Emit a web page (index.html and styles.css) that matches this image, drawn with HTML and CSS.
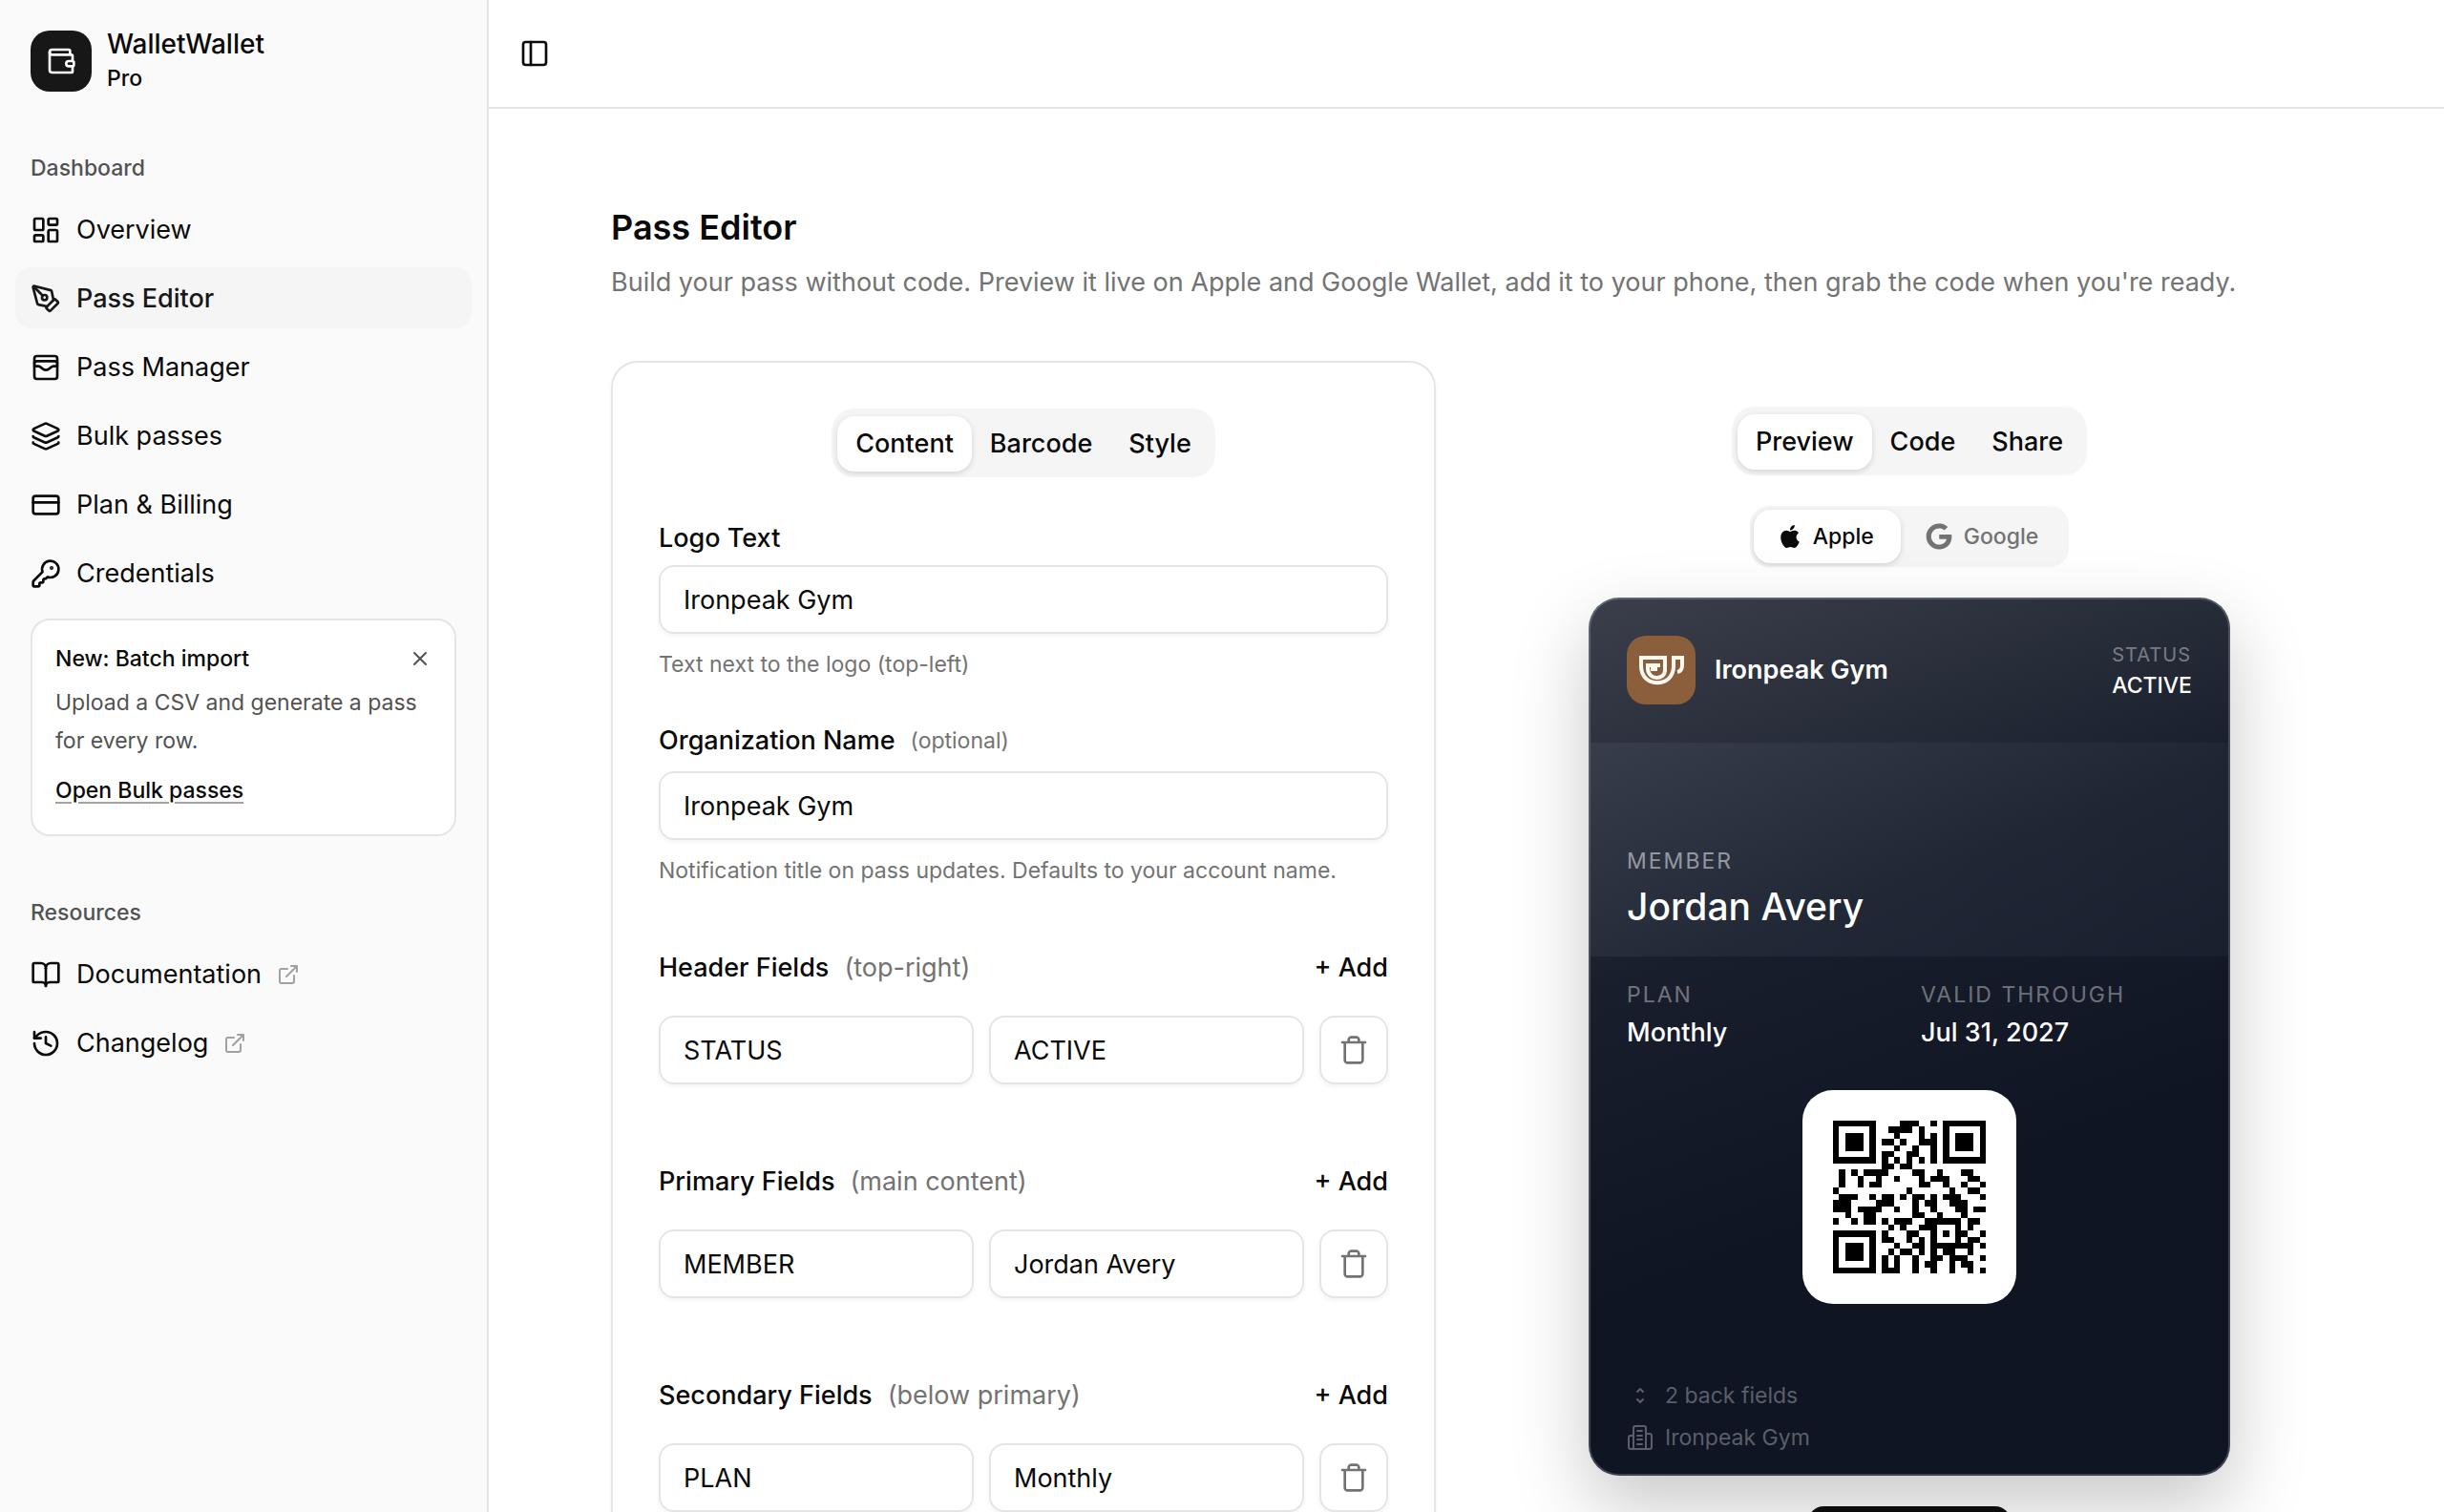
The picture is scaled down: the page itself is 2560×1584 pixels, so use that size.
FILE: index.html
```html
<!DOCTYPE html>
<html lang="en">
<head>
<meta charset="utf-8">
<meta name="viewport" content="width=device-width, initial-scale=1">
<title>Pass Editor – WalletWallet</title>
<link rel="stylesheet" href="styles.css">
</head>
<body>
<svg class="sprite" aria-hidden="true">
  <symbol id="trash" viewBox="0 0 24 24"><path d="M3 6h18M19 6v14c0 1-1 2-2 2H7c-1 0-2-1-2-2V6M8 6V4c0-1 1-2 2-2h4c1 0 2 1 2 2v2"/></symbol>
  <symbol id="external" viewBox="0 0 24 24"><path d="M15 3h6v6M10 14 21 3M18 13v6a2 2 0 0 1-2 2H5a2 2 0 0 1-2-2V8a2 2 0 0 1 2-2h6"/></symbol>
</svg>
<div class="app">
  <aside class="sidebar">
    <div class="brand">
      <span class="brand-mark"><svg class="icon" viewBox="0 0 24 24"><path d="M19 7V4a1 1 0 0 0-1-1H5a2 2 0 0 0 0 4h15a1 1 0 0 1 1 1v4h-3a2 2 0 0 0 0 4h3a1 1 0 0 0 1-1v-2a1 1 0 0 0-1-1"/><path d="M3 5v14a2 2 0 0 0 2 2h15a1 1 0 0 0 1-1v-4"/></svg></span>
      <div class="brand-text"><span class="brand-name">WalletWallet</span><span class="brand-plan">Pro</span></div>
    </div>
    <nav class="group" aria-label="Dashboard">
      <h2 class="group-title">Dashboard</h2>
      <ul class="nav">
        <li><a class="nav-item" href="#overview"><svg class="icon" viewBox="0 0 24 24"><rect x="3" y="3" width="7" height="9" rx="1"/><rect x="14" y="3" width="7" height="5" rx="1"/><rect x="14" y="12" width="7" height="9" rx="1"/><rect x="3" y="16" width="7" height="5" rx="1"/></svg>Overview</a></li>
        <li><a class="nav-item active" href="#editor" aria-current="page"><svg class="icon" viewBox="0 0 24 24"><path d="M15.707 21.293a1 1 0 0 1-1.414 0l-1.586-1.586a1 1 0 0 1 0-1.414l5.586-5.586a1 1 0 0 1 1.414 0l1.586 1.586a1 1 0 0 1 0 1.414z"/><path d="m18 13-1.375-6.874a1 1 0 0 0-.746-.776L3.235 2.028a1 1 0 0 0-1.207 1.207L5.35 15.879a1 1 0 0 0 .776.746L13 18"/><path d="m2.3 2.3 7.286 7.286"/><circle cx="11" cy="11" r="2"/></svg>Pass Editor</a></li>
        <li><a class="nav-item" href="#manager"><svg class="icon" viewBox="0 0 24 24"><rect x="3" y="3" width="18" height="18" rx="2"/><path d="M3 9a2 2 0 0 1 2-2h14a2 2 0 0 1 2 2"/><path d="M3 11h3c.8 0 1.6.3 2.1.9l1.1.9c1.6 1.6 4.1 1.6 5.7 0l1.1-.9c.5-.5 1.3-.9 2.1-.9H21"/></svg>Pass Manager</a></li>
        <li><a class="nav-item" href="#bulk"><svg class="icon" viewBox="0 0 24 24"><path d="M12.83 2.18a2 2 0 0 0-1.66 0L2.6 6.08a1 1 0 0 0 0 1.83l8.58 3.91a2 2 0 0 0 1.66 0l8.58-3.9a1 1 0 0 0 0-1.83z"/><path d="M2 12a1 1 0 0 0 .58.91l8.6 3.91a2 2 0 0 0 1.65 0l8.58-3.9A1 1 0 0 0 22 12"/><path d="M2 17a1 1 0 0 0 .58.91l8.6 3.91a2 2 0 0 0 1.65 0l8.58-3.9A1 1 0 0 0 22 17"/></svg>Bulk passes</a></li>
        <li><a class="nav-item" href="#billing"><svg class="icon" viewBox="0 0 24 24"><rect x="2" y="5" width="20" height="14" rx="2"/><path d="M2 10h20"/></svg>Plan &amp; Billing</a></li>
        <li><a class="nav-item" href="#credentials"><svg class="icon" viewBox="0 0 24 24"><path d="M2.586 17.414A2 2 0 0 0 2 18.828V21a1 1 0 0 0 1 1h3a1 1 0 0 0 1-1v-1a1 1 0 0 1 1-1h1a1 1 0 0 0 1-1v-1a1 1 0 0 1 1-1h.172a2 2 0 0 0 1.414-.586l.814-.814a6.5 6.5 0 1 0-4-4z"/><circle cx="16.5" cy="7.5" r=".5" fill="currentColor"/></svg>Credentials</a></li>
      </ul>
      <section class="promo">
        <div class="promo-head">
          <h3 class="promo-title">New: Batch import</h3>
          <button class="promo-close" type="button" aria-label="Dismiss"><svg class="icon icon-sm" viewBox="0 0 24 24"><path d="M18 6 6 18M6 6l12 12"/></svg></button>
        </div>
        <p class="promo-text">Upload a CSV and generate a pass for every row.</p>
        <a class="promo-link" href="#bulk">Open Bulk passes</a>
      </section>
    </nav>
    <nav class="group" aria-label="Resources">
      <h2 class="group-title">Resources</h2>
      <ul class="nav">
        <li><a class="nav-item" href="#docs"><svg class="icon" viewBox="0 0 24 24"><path d="M12 7v14"/><path d="M3 18a1 1 0 0 1-1-1V4a1 1 0 0 1 1-1h5a4 4 0 0 1 4 4 4 4 0 0 1 4-4h5a1 1 0 0 1 1 1v13a1 1 0 0 1-1 1h-6a3 3 0 0 0-3 3 3 3 0 0 0-3-3z"/></svg>Documentation<svg class="icon icon-sm muted"><use href="#external"/></svg></a></li>
        <li><a class="nav-item" href="#changelog"><svg class="icon" viewBox="0 0 24 24"><path d="M3 12a9 9 0 1 0 9-9 9.75 9.75 0 0 0-6.74 2.74L3 8"/><path d="M3 3v5h5"/><path d="M12 7v5l4 2"/></svg>Changelog<svg class="icon icon-sm muted"><use href="#external"/></svg></a></li>
      </ul>
    </nav>
  </aside>

  <div class="main">
    <header class="topbar">
      <button class="topbar-toggle" type="button" aria-label="Toggle sidebar"><svg class="icon" viewBox="0 0 24 24"><rect x="3" y="3" width="18" height="18" rx="2"/><path d="M9 3v18"/></svg></button>
    </header>
    <main class="content">
      <h1 class="page-title">Pass Editor</h1>
      <p class="page-desc">Build your pass without code. Preview it live on Apple and Google Wallet, add it to your phone, then grab the code when you're ready.</p>
      <div class="columns">
        <form class="panel">
          <div class="tabs" role="tablist">
            <button class="tab selected" type="button" role="tab" aria-selected="true">Content</button>
            <button class="tab" type="button" role="tab" aria-selected="false">Barcode</button>
            <button class="tab" type="button" role="tab" aria-selected="false">Style</button>
          </div>
          <div class="fields">
            <div class="field">
              <label class="label" for="logo-text">Logo Text</label>
              <input class="input" id="logo-text" type="text" value="Ironpeak Gym">
              <p class="hint">Text next to the logo (top-left)</p>
            </div>
            <div class="field">
              <label class="label" for="org-name">Organization Name <span class="optional">(optional)</span></label>
              <input class="input" id="org-name" type="text" value="Ironpeak Gym">
              <p class="hint">Notification title on pass updates. Defaults to your account name.</p>
            </div>
          </div>
          <div class="groups">
            <section class="pairs">
              <div class="pairs-head"><h2 class="pairs-title">Header Fields <span class="pairs-note">(top-right)</span></h2><button class="add" type="button">+ Add</button></div>
              <div class="pair">
                <input class="input" type="text" aria-label="Header label" value="STATUS">
                <input class="input" type="text" aria-label="Header value" value="ACTIVE">
                <button class="remove" type="button" aria-label="Remove field"><svg class="icon"><use href="#trash"/></svg></button>
              </div>
            </section>
            <section class="pairs">
              <div class="pairs-head"><h2 class="pairs-title">Primary Fields <span class="pairs-note">(main content)</span></h2><button class="add" type="button">+ Add</button></div>
              <div class="pair">
                <input class="input" type="text" aria-label="Primary label" value="MEMBER">
                <input class="input" type="text" aria-label="Primary value" value="Jordan Avery">
                <button class="remove" type="button" aria-label="Remove field"><svg class="icon"><use href="#trash"/></svg></button>
              </div>
            </section>
            <section class="pairs">
              <div class="pairs-head"><h2 class="pairs-title">Secondary Fields <span class="pairs-note">(below primary)</span></h2><button class="add" type="button">+ Add</button></div>
              <div class="pair">
                <input class="input" type="text" aria-label="Secondary label" value="PLAN">
                <input class="input" type="text" aria-label="Secondary value" value="Monthly">
                <button class="remove" type="button" aria-label="Remove field"><svg class="icon"><use href="#trash"/></svg></button>
              </div>
            </section>
          </div>
        </form>

        <section class="preview" aria-label="Preview">
          <div class="tabs" role="tablist">
            <button class="tab selected" type="button" role="tab" aria-selected="true">Preview</button>
            <button class="tab" type="button" role="tab" aria-selected="false">Code</button>
            <button class="tab" type="button" role="tab" aria-selected="false">Share</button>
          </div>
          <div class="switch">
            <button class="switch-item selected" type="button" aria-pressed="true"><svg class="logo-apple" viewBox="0 0 24 24"><path d="M12.152 6.896c-.948 0-2.415-1.078-3.96-1.04-2.04.027-3.91 1.183-4.961 3.014-2.117 3.675-.546 9.103 1.519 12.09 1.013 1.454 2.208 3.09 3.792 3.039 1.52-.065 2.09-.987 3.935-.987 1.831 0 2.35.987 3.96.948 1.637-.026 2.676-1.48 3.676-2.948 1.156-1.688 1.636-3.325 1.662-3.415-.039-.013-3.182-1.221-3.22-4.857-.026-3.04 2.48-4.494 2.597-4.559-1.429-2.09-3.623-2.324-4.39-2.376-2-.156-3.675 1.09-4.61 1.09zM15.53 3.83c.843-1.012 1.4-2.427 1.245-3.83-1.207.052-2.662.805-3.532 1.818-.78.896-1.454 2.338-1.273 3.714 1.338.104 2.715-.688 3.559-1.701"/></svg>Apple</button>
            <button class="switch-item" type="button" aria-pressed="false"><svg class="logo-google" viewBox="0 0 488 512"><path d="M488 261.8C488 403.3 391.1 504 248 504 110.8 504 0 393.2 0 256S110.8 8 248 8c66.8 0 123 24.5 166.3 64.9l-67.5 64.9C258.5 52.6 94.3 116.6 94.3 256c0 86.5 69.1 156.6 153.7 156.6 98.2 0 135-70.4 140.8-106.9H248v-85.3h236.1c2.3 12.7 3.9 24.9 3.9 41.4z"/></svg>Google</button>
          </div>

          <article class="pass">
            <header class="pass-head">
              <span class="pass-logo"><svg viewBox="0 0 72 72"><path d="M35 31H22v3c0 13 18 13 18 2V23H15v9c0 23 34 23 34 0v-9h9v8q0 6-5 7"/><path d="M30 31v4h-5"/></svg></span>
              <h2 class="pass-name">Ironpeak Gym</h2>
              <dl class="pass-status"><dt>STATUS</dt><dd>ACTIVE</dd></dl>
            </header>
            <dl class="pass-strip"><dt>MEMBER</dt><dd>Jordan Avery</dd></dl>
            <div class="pass-row">
              <dl><dt>PLAN</dt><dd>Monthly</dd></dl>
              <dl><dt>VALID THROUGH</dt><dd>Jul 31, 2027</dd></dl>
            </div>
            <div class="pass-code">
              <svg class="qr" viewBox="0 0 25 25" role="img" aria-label="QR code" shape-rendering="crispEdges">
                <path class="qr-solid" fill-rule="evenodd" d="M0 0h7v7h-7zM1 1v5h5v-5zM2 2h3v3h-3zM18 0h7v7h-7zM19 1v5h5v-5zM20 2h3v3h-3zM0 18h7v7h-7zM1 19v5h5v-5zM2 20h3v3h-3zM16 16h5v5h-5zM17 17v3h3v-3zM18 18h1v1h-1z"/>
                <path class="qr-bits" d="M11 .5h3M16 .5h1M9 1.5h4M14 1.5h1M10 2.5h1M14 2.5h1M16 2.5h1M8 3.5h2M11 3.5h1M14 3.5h3M10 4.5h1M13 4.5h1M16 4.5h1M8 5.5h2M12 5.5h2M16 5.5h1M8 6.5h1M10 6.5h1M12 6.5h1M14 6.5h1M16 6.5h1M8 7.5h2M11 7.5h2M1 8.5h1M3 8.5h1M5 8.5h4M13 8.5h2M17 8.5h1M21 8.5h2M1 9.5h1M4 9.5h1M7 9.5h1M10 9.5h1M14 9.5h1M16 9.5h3M22 9.5h2M1 10.5h1M4 10.5h1M6 10.5h2M14 10.5h2M18 10.5h1M21 10.5h1M24 10.5h1M0 11.5h1M12 11.5h1M19 11.5h1M22 11.5h2M1 12.5h3M6 12.5h1M8 12.5h2M11 12.5h1M13 12.5h2M16 12.5h1M18 12.5h3M24 12.5h1M0 13.5h3M7 13.5h3M13 13.5h1M15 13.5h2M19 13.5h3M0 14.5h3M4 14.5h4M10 14.5h1M13 14.5h1M16 14.5h1M20 14.5h2M23 14.5h2M2 15.5h1M5 15.5h2M13 15.5h2M17 15.5h1M21 15.5h1M0 16.5h1M3 16.5h1M5 16.5h2M8 16.5h1M10 16.5h3M15 16.5h1M22 16.5h2M9 17.5h1M11 17.5h1M14 17.5h2M22 17.5h1M8 18.5h1M12 18.5h2M21 18.5h1M24 18.5h1M8 19.5h2M12 19.5h1M14 19.5h1M22 19.5h2M10 20.5h1M13 20.5h2M21 20.5h2M24 20.5h1M9 21.5h1M11 21.5h2M14 21.5h1M16 21.5h1M18 21.5h2M22 21.5h1M8 22.5h1M10 22.5h1M13 22.5h1M16 22.5h2M19 22.5h3M24 22.5h1M8 23.5h1M10 23.5h1M13 23.5h1M15 23.5h2M19 23.5h1M21 23.5h2M8 24.5h3M13 24.5h1M16 24.5h1M19 24.5h1M22 24.5h1M24 24.5h1"/>
              </svg>
            </div>
            <ul class="pass-foot">
              <li><svg class="icon icon-md" viewBox="0 0 28 28"><path d="M11 10l3-3 3 3M11 18l3 3 3-3"/></svg>2 back fields</li>
              <li><svg class="icon icon-md" viewBox="0 0 28 28"><path d="M7 26V4a2 2 0 0 1 2-2h9a2 2 0 0 1 2 2v22M7 12H4a2 2 0 0 0-2 2v10a2 2 0 0 0 2 2h20a2 2 0 0 0 2-2V12a2 2 0 0 0-2-2h-4M11 7h5M11 12h5M11 16h5M11 21h5"/></svg>Ironpeak Gym</li>
            </ul>
          </article>
          <button class="badge" type="button" aria-label="Add to wallet"></button>
        </section>
      </div>
    </main>
  </div>
</div>
</body>
</html>
```
FILE: styles.css
```css
:root {
  --text: #0a0a0a;
  --muted: #737373;
  --border: #e5e5e5;
  --soft: #f5f5f5;
  --body-size: 27px;
  --small-size: 23px;
}

*, *::before, *::after { box-sizing: border-box; }

body, h1, h2, h3, p, ul, dl, dd { margin: 0; padding: 0; }

ul { list-style: none; }

body {
  background: #fff;
  color: var(--text);
  font-family: Inter, "Liberation Sans", sans-serif;
  font-size: var(--body-size);
  line-height: 40px;
}

h1, h2, h3 { font-size: inherit; font-weight: 500; }

button, input {
  font: inherit;
  color: inherit;
  border: 0;
  margin: 0;
  padding: 0;
  background: none;
}

button { cursor: pointer; }

a { color: inherit; text-decoration: none; }

.sprite { position: absolute; width: 0; height: 0; }

.icon {
  flex: none;
  display: block;
  width: 32px;
  height: 32px;
  fill: none;
  stroke: currentColor;
  stroke-width: 2;
  stroke-linecap: round;
  stroke-linejoin: round;
}

.icon-md { width: 28px; height: 28px; }
.icon-sm { width: 24px; height: 24px; }

.app {
  display: flex;
  height: 100vh;
  overflow: hidden;
}

/* Sidebar */

.sidebar {
  flex: none;
  width: 512px;
  background: #fafafa;
  border-right: 2px solid var(--border);
}

.brand {
  display: flex;
  align-items: center;
  gap: 16px;
  padding: 28px 32px;
}

.brand-mark {
  display: grid;
  place-items: center;
  width: 64px;
  height: 64px;
  border-radius: 20px;
  background: #171717;
  color: #fff;
}

.brand-text {
  display: flex;
  flex-direction: column;
  line-height: 36px;
  font-weight: 500;
}

.brand-name { font-size: 28px; }

.brand-plan { font-size: var(--small-size); }

.group { padding: 16px; }

.group-title {
  padding: 0 16px;
  font-size: var(--small-size);
  line-height: 64px;
  color: #525252;
}

.nav {
  display: flex;
  flex-direction: column;
  gap: 8px;
}

.nav-item {
  display: flex;
  align-items: center;
  gap: 16px;
  height: 64px;
  padding: 2px 16px 0;
  border-radius: 16px;
}

.nav-item.active {
  background: var(--soft);
  color: #171717;
  font-weight: 500;
}

.muted { color: #a1a1a1; }

.promo {
  margin: 16px;
  padding: 24px 24px 26px;
  border: 2px solid var(--border);
  border-radius: 20px;
  background: #fff;
  font-size: var(--small-size);
}

.promo-head {
  display: flex;
  align-items: center;
  justify-content: space-between;
  line-height: 32px;
}

.promo-close { color: #525252; }

.promo-text {
  margin-top: 10px;
  color: #525252;
}

.promo-link {
  display: inline-block;
  margin-top: 12px;
  font-weight: 500;
  text-decoration: underline;
  text-decoration-color: #a3a3a3;
  text-decoration-thickness: 2px;
  text-underline-offset: 4px;
}

/* Main area */

.main {
  flex: 1;
  min-width: 0;
  overflow-y: auto;
  scrollbar-width: none;
}

.topbar {
  display: flex;
  align-items: center;
  height: 114px;
  padding: 0 32px;
  border-bottom: 2px solid var(--border);
}

.content { padding: 100px 128px 0; }

.page-title {
  font-size: 36px;
  font-weight: 600;
  line-height: 48px;
}

.page-desc {
  margin-top: 14px;
  color: var(--muted);
}

.columns {
  display: grid;
  grid-template-columns: minmax(0, 1fr) minmax(0, 1fr);
  gap: 64px;
  margin-top: 62px;
}

.panel {
  padding: 48px;
  border: 2px solid var(--border);
  border-radius: 28px;
  box-shadow: 0 2px 4px rgba(0, 0, 0, 0.06);
}

.tabs {
  display: flex;
  width: fit-content;
  height: 72px;
  margin: 0 auto;
  padding: 8px 6px 6px;
  border-radius: 24px;
  background: var(--soft);
}

.tab {
  padding: 0 19px;
  border-radius: 18px;
  font-weight: 500;
}

.selected {
  background: #fff;
  color: var(--text);
  box-shadow: 0 2px 6px rgba(0, 0, 0, 0.14);
}

.fields {
  display: grid;
  gap: 46px;
  margin-top: 46px;
}

.label {
  display: flex;
  align-items: center;
  gap: 16px;
  margin-bottom: 12px;
  line-height: 36px;
  font-weight: 500;
}

.field:first-child .label { margin-bottom: 10px; }

.optional {
  font-size: var(--small-size);
  font-weight: 400;
  color: var(--muted);
}

.input {
  display: block;
  width: 100%;
  min-width: 0;
  height: 72px;
  padding: 0 24px;
  border: 2px solid var(--border);
  border-radius: 16px;
  background: #fff;
  box-shadow: 0 2px 4px rgba(0, 0, 0, 0.05);
}

.hint {
  margin-top: 16px;
  font-size: var(--small-size);
  line-height: 32px;
  color: var(--muted);
}

.field:last-child .label { margin-bottom: 14px; }

.groups {
  display: grid;
  gap: 82px;
  margin-top: 66px;
}

.pairs-head {
  display: flex;
  justify-content: space-between;
  margin-bottom: 30px;
}

.pairs-title { display: flex; gap: 16px; }

.pairs-note { font-weight: 400; color: var(--muted); }

.add { font-weight: 500; }

.pair {
  display: grid;
  grid-template-columns: 1fr 1fr 72px;
  gap: 16px;
}

.remove {
  display: grid;
  place-items: center;
  border: 2px solid var(--border);
  border-radius: 16px;
  color: var(--muted);
  box-shadow: 0 2px 4px rgba(0, 0, 0, 0.05);
}

/* Preview column */

.preview {
  display: flex;
  flex-direction: column;
  align-items: center;
  gap: 32px;
  padding-top: 48px;
}

.preview .tabs { margin: 0; }

.switch {
  display: flex;
  height: 64px;
  padding: 4px;
  border-radius: 20px;
  background: var(--soft);
  font-size: var(--small-size);
  font-weight: 500;
  color: var(--muted);
}

.switch-item {
  display: flex;
  align-items: center;
  gap: 12px;
  padding: 0 28px 0 26px;
  border-radius: 18px;
}

.logo-apple { width: 24px; height: 24px; fill: currentColor; }
.logo-google { width: 28px; height: 28px; fill: currentColor; }

.pass {
  display: flex;
  flex-direction: column;
  width: 100%;
  max-width: 672px;
  min-height: 920px;
  border: 2px solid rgba(255, 255, 255, 0.2);
  border-radius: 32px;
  background:
    linear-gradient(160deg, rgba(255, 255, 255, 0.18), rgba(255, 255, 255, 0.04) 36%, rgba(255, 255, 255, 0) 65%) border-box,
    #0f1523 border-box;
  color: #fff;
  box-shadow: 0 32px 80px rgba(0, 0, 0, 0.22);
}

.pass-head {
  display: flex;
  align-items: center;
  gap: 20px;
  padding: 38px 38px 40px;
}

.pass-logo {
  width: 72px;
  height: 72px;
  border-radius: 20px;
  background: #8b5e3c;
}

.pass-logo svg {
  display: block;
  fill: none;
  stroke: #fff8f0;
  stroke-width: 4;
}

.pass-name { font-weight: 600; }

.pass-status {
  margin-left: auto;
  font-size: var(--small-size);
  font-weight: 500;
  line-height: 32px;
}

.pass dt {
  font-size: var(--small-size);
  font-weight: 400;
  line-height: 32px;
  letter-spacing: 2px;
  color: rgba(255, 255, 255, 0.4);
}

.pass .pass-status dt { font-size: 20px; letter-spacing: 1px; }

.pass-strip {
  display: flex;
  flex-direction: column;
  justify-content: flex-end;
  gap: 4px;
  height: 224px;
  padding: 24px 38px;
  background: linear-gradient(100deg, rgba(180, 195, 225, 0.07), rgba(180, 195, 225, 0.04));
}

.pass .pass-strip dt { color: rgba(255, 255, 255, 0.5); }

.pass-strip dd {
  font-size: 39px;
  font-weight: 500;
  line-height: 56px;
}

.pass-row {
  display: grid;
  grid-template-columns: 1fr 1fr;
  gap: 24px;
  padding: 24px 38px 40px;
}

.pass-row dl { display: grid; gap: 4px; }

.pass-row dd { font-weight: 500; }

.pass-code {
  align-self: center;
  padding: 32px;
  border-radius: 32px;
  background: #fff;
}

.qr { display: block; width: 160px; height: 160px; }
.qr-solid { fill: #000; }
.qr-bits { stroke: #000; stroke-width: 1; }

.pass-foot {
  display: grid;
  gap: 16px;
  margin-top: auto;
  padding: 24px 38px;
  font-size: var(--small-size);
  line-height: 28px;
  color: #5a5f6a;
}

.pass-foot li {
  display: flex;
  align-items: center;
  gap: 12px;
}

.badge {
  width: 212px;
  height: 64px;
  border-radius: 16px;
  background: #0d0d0d;
}
```
